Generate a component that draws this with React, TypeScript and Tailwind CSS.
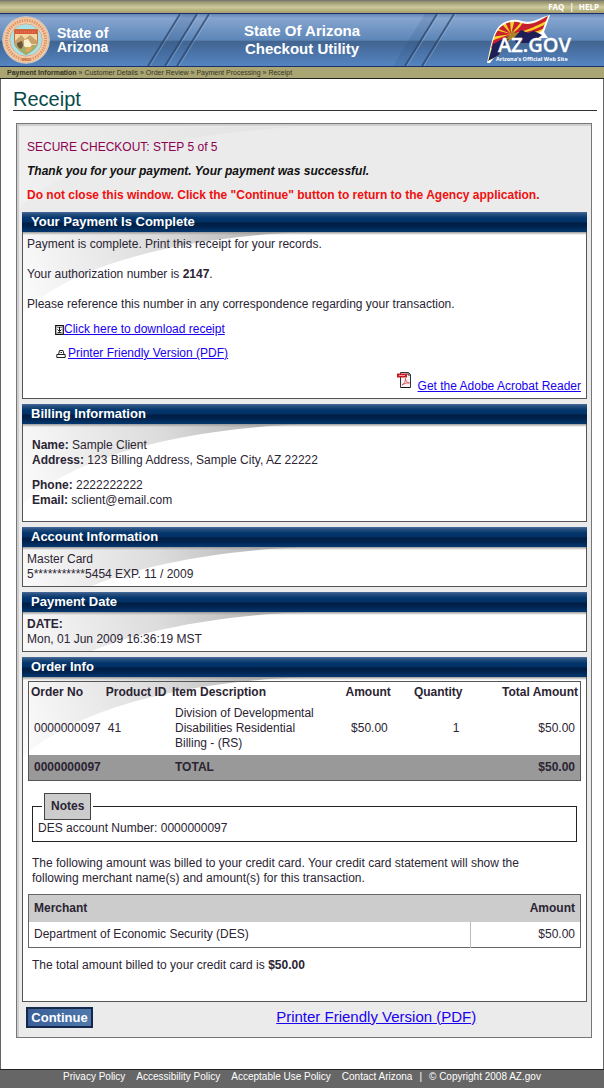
import { useId, type ReactNode } from 'react';

function StateSeal() {
  return (
    <svg viewBox="0 0 48 48" className="size-12 shrink-0" aria-hidden="true">
      <circle cx="24" cy="24" r="23.3" fill="#f5e9d5" stroke="#c9d8e6" strokeWidth=".8" />
      <circle cx="24" cy="24" r="19.6" fill="none" stroke="#f0c8a4" strokeWidth="5.6" />
      <circle cx="24" cy="24" r="19.6" fill="none" stroke="#dd9062" strokeWidth="2.8" strokeDasharray="1.3 1.2" />
      <circle cx="24" cy="24" r="22.8" fill="none" stroke="#e8ab7d" strokeWidth=".7" />
      <circle cx="24" cy="24" r="16.3" fill="#a8e2e8" stroke="#e39a68" strokeWidth=".8" />
      <path d="M12.5 13.5h23v12c0 6-5 9-11.5 13-6.5-4-11.5-7-11.5-13z" fill="#f3d9a4" stroke="#c9703f" strokeWidth="1" />
      <path d="M13 14h22v4H13z" fill="#d8573a" />
      <path d="M14 16h20" stroke="#f0a06a" strokeWidth=".8" strokeDasharray="1 1" />
      <path d="M13 25l6-6 4 4 5-4 7 6v3H13z" fill="#c9a26a" />
      <path d="M13 27h10l5 2h7c-1 5-6 7-11 10-6-4-10-6-11-12z" fill="#a3ad6c" />
      <path d="M15 27l5-2 1 5-2 3c-3-1-4-3-4-6z" fill="#6d5238" />
      <path d="M22 24l4-1 4 6-4 4-4-3z" fill="#fbf0cf" />
      <path d="M24 31l7 0-3 4-4 1z" fill="#e0a85f" />
      <text x="24" y="44.6" textAnchor="middle" fontSize="4.6" fontWeight="700" fontFamily="Liberation Serif, serif" fill="#b9521f">1912</text>
    </svg>
  );
}

function AzLogo() {
  const id = useId();
  return (
    <svg viewBox="0 0 86 50" className="h-[50px] w-[86px] shrink-0" role="img" aria-label="AZ.GOV">
      <defs>
        <clipPath id={id}>
          <path d="M1 46C4 35 6 22 11 15 16 8 25 5 34 8c12 3 17-2 27-7l-6 15C45 22 35 20 27 22c-6 2-12 12-15 18z" />
        </clipPath>
      </defs>
      <path d="M0 48C3 35 5 21 10 14 15 6 26 3 35 6 46 9 51 3 63 0l-6 17 4 6H24L12 36 3 48z" fill="#fff" />
      <g clipPath={`url(#${id})`}>
        <path d="M0 0h64v48H0z" fill="#f7d32a" />
        <g fill="#c8202d">
          <path d="M24 19 4 22l4-7z" />
          <path d="M24 19 9 13l5-5z" />
          <path d="M24 19 17 5l6-1z" />
          <path d="M24 19 28 4l7 2z" />
          <path d="M24 19C31 15 34 11 36 7c9 2 16-3 26-7l-1 5C51 10 41 16 24 19z" />
          <path d="M24 19c16-1 27-5 36-11l-2 5C47 18 37 20 24 19z" />
          <path d="M24 19 3 34l1-8z" />
        </g>
        <path d="M0 50 6 29l18-9-10 22z" fill="#1d1f57" />
      </g>
      <path d="M23 20l3-5 2 3 4 0-2 4-6 3-5-1z" fill="#a98324" />
      <path d="m27 23 7-8 7 3 6-2 8 4-10 8H29z" fill="#1d1f57" />
      <text x="11" y="37" fontFamily="Open Sans, sans-serif" fontWeight="600" fontSize="20" stroke="#fff" strokeWidth=".3" fill="#fff">AZ.GOV</text>
      <text x="9" y="46" fontFamily="Open Sans, sans-serif" fontWeight="700" fontSize="5.5" fill="#fff">Arizona's Official Web Site</text>
    </svg>
  );
}

function Stripes() {
  const lines = [180, 197, 209, 437, 454];
  return (
    <svg viewBox="0 0 604 52" preserveAspectRatio="none" className="absolute inset-0 size-full" aria-hidden="true">
      <path d="M180 0h17l-32 52h-17zM425 0h12l-32 52h-12z" fill="#24466f" opacity=".14" />
      {lines.map((x) => (
        <g key={x}>
          <path d={`M${x} 0l-32 52`} stroke="#2b456c" strokeWidth="1.8" opacity=".75" />
          <path d={`M${x + 2} 0l-32 52`} stroke="#a9c2e0" strokeWidth=".8" opacity=".5" />
        </g>
      ))}
    </svg>
  );
}

function Swoosh({ soft = false }: { soft?: boolean }) {
  const id = useId();
  return (
    <svg viewBox="0 0 300 100" className="absolute top-0 left-0 h-[100px] w-[300px]" aria-hidden="true">
      <defs>
        <linearGradient id={id} gradientUnits="userSpaceOnUse" x1="235" y1="0" x2="10" y2="80">
          <stop offset="0" stopColor={soft ? '#e4e4e4' : '#b8b8b8'} />
          <stop offset="0.4" stopColor={soft ? '#e9e9e9' : '#dcdcdc'} />
          <stop offset="1" stopColor={soft ? '#f0f0f0' : '#fafafa'} />
        </linearGradient>
      </defs>
      <path d="M0 0H280C150 6 50 34 0 80z" fill={`url(#${id})`} />
    </svg>
  );
}

function Section({ title, className, children }: { title: string; className?: string; children: ReactNode }) {
  return (
    <section>
      <h2 className="h-[20px] bg-[linear-gradient(#4a6d9c_0,#285080_2px,#03366c_6px,#023064_10px,#001d42_11px,#012450_15px,#03346a_19px)] pl-[9px] text-[13px] leading-[20px] font-bold text-white">
        {title}
      </h2>
      <div className="relative overflow-hidden border border-t-0 border-[#555] bg-white">
        <Swoosh />
        <div className="absolute inset-x-0 top-0 h-[3px] bg-linear-to-b from-[#999] to-transparent" />
        <div className={`relative ${className ?? ''}`}>{children}</div>
      </div>
    </section>
  );
}

const link = 'text-[#1a00f0] underline';

export default function App() {
  return (
    <div className="flex min-h-screen flex-col bg-white font-['Liberation_Sans',Arial,sans-serif] text-[12px] leading-[15px] text-[#2b2433]">
      <header>
        <div className="flex h-[13px] items-center justify-end gap-[5px] border-t border-[#777] bg-linear-to-b from-[#8e8a68] via-[#cdc99b] to-[#a5a06c] pr-[5px] font-['Open_Sans',sans-serif] text-[8px] leading-[12px] font-bold text-white">
          <a href="#faq">FAQ</a>
          <span>|</span>
          <a href="#help">HELP</a>
        </div>
        <div className="relative h-[54px] border-t border-b border-[#1c2f6b] bg-[linear-gradient(#6486b4_0,#86a5cf_8%,#5d86b8_50%,#42658f_53%,#4870a4_70%,#5585c0_100%)]">
          <Stripes />
          <div className="relative grid h-full grid-cols-[1fr_auto_1fr] items-center pr-[31px] pl-[2px]">
            <div className="flex items-center gap-[7px] text-[14px] leading-[14px] font-bold text-white">
              <StateSeal />
              <span>
                State of
                <br />
                Arizona
              </span>
            </div>
            <h1 className="pl-[29px] text-center text-[15px] leading-[18px] font-bold text-white">
              State Of Arizona
              <br />
              Checkout Utility
            </h1>
            <div className="flex justify-end">
              <AzLogo />
            </div>
          </div>
        </div>
        <nav className="flex h-[12px] items-center border-b border-[#222] bg-[#aaa673] pl-[7px] text-[7px] leading-[11px] text-[#35331f]">
          <span className="whitespace-pre">
            <b>Payment Information</b> » Customer Details » Order Review » Payment Processing » Receipt
          </span>
        </nav>
      </header>

      <main className="flex-1 border-x border-[#666] pr-[6px] pl-[12px]">
        <h1 className="h-[32px] border-b border-[#333] pt-[8px] text-[20px] leading-[24px] text-[#064b4b]">Receipt</h1>
        <div className="relative mt-[12px] mr-[5px] mb-[31px] ml-[3px] border border-[#777] bg-[#ebebeb] shadow-[inset_2px_2px_0_#cfcfcf]">
          <div className="absolute top-[3px] left-[3px]">
            <Swoosh soft />
          </div>
          <div className="relative pr-[4px] pl-[5px]">
            <div className="px-[5px] pt-[14px] pb-[8px] leading-[18px] font-bold">
              <p className="font-normal text-[#8b0050]">SECURE CHECKOUT: STEP 5 of 5</p>
              <p className="mt-[6px] text-[#111] italic">Thank you for your payment. Your payment was successful.</p>
              <p className="mt-[6px] text-[#f01010]">
                Do not close this window. Click the "Continue" button to return to the Agency application.
              </p>
            </div>

            <div className="flex flex-col gap-[5px]">
              <Section title="Your Payment Is Complete" className="px-[4px] pt-[5px] pb-[4px]">
                <p>Payment is complete. Print this receipt for your records.</p>
                <p className="mt-[15px]">
                  Your authorization number is <b>2147</b>.
                </p>
                <p className="mt-[15px]">Please reference this number in any correspondence regarding your transaction.</p>
                <p className="mt-[10px] flex items-center pl-[28px]">
                  <svg viewBox="0 0 9 10" className="h-[10px] w-[9px]" aria-hidden="true">
                    <path d="M.7.7h7.6v8.6H.7z" fill="#fff" stroke="#111" strokeWidth="1.2" />
                    <path d="M2.5 2.5h1M5.5 2.5h1M4.5 2v4M2.5 4.5l2 2 2-2M2.5 7.6h4" fill="none" stroke="#111" strokeWidth="1" />
                  </svg>
                  <a href="#download" className={link}>Click here to download receipt</a>
                </p>
                <p className="mt-[9px] flex items-center gap-[2px] pl-[29px]">
                  <svg viewBox="0 0 10 10" className="size-[10px]" aria-hidden="true">
                    <path d="M2.5 5.5 3.5 1.5h3.5l1 4M.8 5.5h8.4v3H.8zM4.5 3.5h1.5" fill="none" stroke="#222" strokeWidth="1" />
                  </svg>
                  <a href="#print" className={link}>Printer Friendly Version (PDF)</a>
                </p>
                <p className="mt-[11px] flex items-end justify-end gap-[7px] pr-px">
                  <svg viewBox="0 0 14 16" className="mb-[6px] h-[16px] w-[14px]" aria-hidden="true">
                    <path d="M3.5.5h8l2 2v13h-10z" fill="#f3f3f3" stroke="#333" />
                    <path d="M11 .5v2.5h2.5" fill="none" stroke="#222" />
                    <path d="M0 1.5h10v4H0z" fill="#c91a24" />
                    <path d="M2 3.5h6" stroke="#f4a0a0" />
                    <path d="M5 13c2-1 4-4 3.5-6.5C8 8 10 11 12.5 11 9 10.5 7 12 5 13z" fill="none" stroke="#d23b45" strokeWidth=".8" />
                    <path d="M4 15.5h9" stroke="#111" />
                  </svg>
                  <a href="#reader" className={link}>Get the Adobe Acrobat Reader</a>
                </p>
              </Section>

              <Section title="Billing Information" className="px-[9px] pt-[14px] pb-[13px]">
                <p><b>Name:</b> Sample Client</p>
                <p><b>Address:</b> 123 Billing Address, Sample City, AZ 22222</p>
                <p className="mt-[10px]"><b>Phone:</b> 2222222222</p>
                <p><b>Email:</b> sclient@email.com</p>
              </Section>

              <Section title="Account Information" className="px-[4px] pt-[5px] pb-[4px]">
                <p>Master Card</p>
                <p>5***********5454 EXP. 11 / 2009</p>
              </Section>

              <Section title="Payment Date" className="px-[4px] pt-[5px] pb-[4px]">
                <p className="font-bold">DATE:</p>
                <p>Mon, 01 Jun 2009 16:36:19 MST</p>
              </Section>

              <Section title="Order Info" className="px-[5px] pt-[4px] pb-[28px]">
                <table className="w-full table-fixed border-collapse border border-[#555]">
                  <colgroup>
                    <col className="w-[14%]" />
                    <col className="w-[12%]" />
                    <col className="w-[28%]" />
                    <col className="w-[12%]" />
                    <col className="w-[13%]" />
                    <col className="w-[21%]" />
                  </colgroup>
                  <thead>
                    <tr className="h-[21px] whitespace-nowrap">
                      <th className="px-[2px] text-left">Order No</th>
                      <th className="text-left">Product ID</th>
                      <th className="text-left">Item Description</th>
                      <th className="px-[2px] text-right">Amount</th>
                      <th className="px-[2px] text-right">Quantity</th>
                      <th className="px-[2px] text-right">Total Amount</th>
                    </tr>
                  </thead>
                  <tbody>
                    <tr className="h-[52px]">
                      <td className="px-[5px]">0000000097</td>
                      <td className="px-[2px]">41</td>
                      <td className="px-[3px]">Division of Developmental Disabilities Residential Billing - (RS)</td>
                      <td className="px-[5px] text-right">$50.00</td>
                      <td className="px-[5px] text-right">1</td>
                      <td className="px-[5px] text-right">$50.00</td>
                    </tr>
                    <tr className="h-[26px] bg-[#999] font-bold">
                      <td className="px-[5px]">0000000097</td>
                      <td />
                      <td className="px-[3px]">TOTAL</td>
                      <td />
                      <td />
                      <td className="px-[5px] text-right">$50.00</td>
                    </tr>
                  </tbody>
                </table>

                <fieldset className="mx-[4px] mt-[12px] border border-[#222] px-[5px] pb-[5px]">
                  <legend className="ml-[6px] border border-[#444] bg-[#ccc] px-[6px] py-[5px] font-bold shadow-[0_0_0_2px_#fff]">Notes</legend>
                  <p className="pt-px">DES account Number: 0000000097</p>
                </fieldset>

                <p className="mt-[14px] pr-[40px] pl-[4px]">
                  The following amount was billed to your credit card. Your credit card statement will show the following
                  merchant name(s) and amount(s) for this transaction.
                </p>

                <table className="mt-[8px] w-full table-fixed border-collapse border border-[#666]">
                  <colgroup>
                    <col className="w-[80%]" />
                    <col className="w-[20%]" />
                  </colgroup>
                  <thead>
                    <tr className="h-[27px] bg-[#ccc]">
                      <th className="px-[5px] text-left">Merchant</th>
                      <th className="px-[5px] text-right">Amount</th>
                    </tr>
                  </thead>
                  <tbody>
                    <tr className="h-[26px]">
                      <td className="border-r border-[#bbb] px-[5px]">Department of Economic Security (DES)</td>
                      <td className="px-[5px] text-right">$50.00</td>
                    </tr>
                  </tbody>
                </table>

                <p className="mt-[10px] px-[4px]">
                  The total amount billed to your credit card is <b>$50.00</b>
                </p>
              </Section>
            </div>

            <div className="grid grid-cols-[45%_1fr] items-center pt-[5px] pr-[5px] pb-[9px] pl-[4px]">
              <button
                type="button"
                className="h-[21px] w-[67px] border-2 border-[#14284c] bg-linear-to-r from-[#3a5f97] to-[#4f79ad] text-[13px] leading-[15px] font-bold text-white"
              >
                Continue
              </button>
              <a href="#print" className={`${link} justify-self-start pb-[2px] text-[15px] leading-[18px]`}>Printer Friendly Version (PDF)</a>
            </div>
          </div>
        </div>
      </main>

      <footer className="flex h-[19px] justify-center gap-[11px] border-t border-[#222] bg-[#666] pt-[1px] text-[10px] leading-[12px] text-white">
        <a href="#privacy">Privacy Policy</a>
        <a href="#accessibility">Accessibility Policy</a>
        <a href="#use">Acceptable Use Policy</a>
        <span className="flex gap-[7px]">
          <a href="#contact">Contact Arizona</a>
          <span>|</span>
          <span>© Copyright 2008 AZ.gov</span>
        </span>
      </footer>
    </div>
  );
}
